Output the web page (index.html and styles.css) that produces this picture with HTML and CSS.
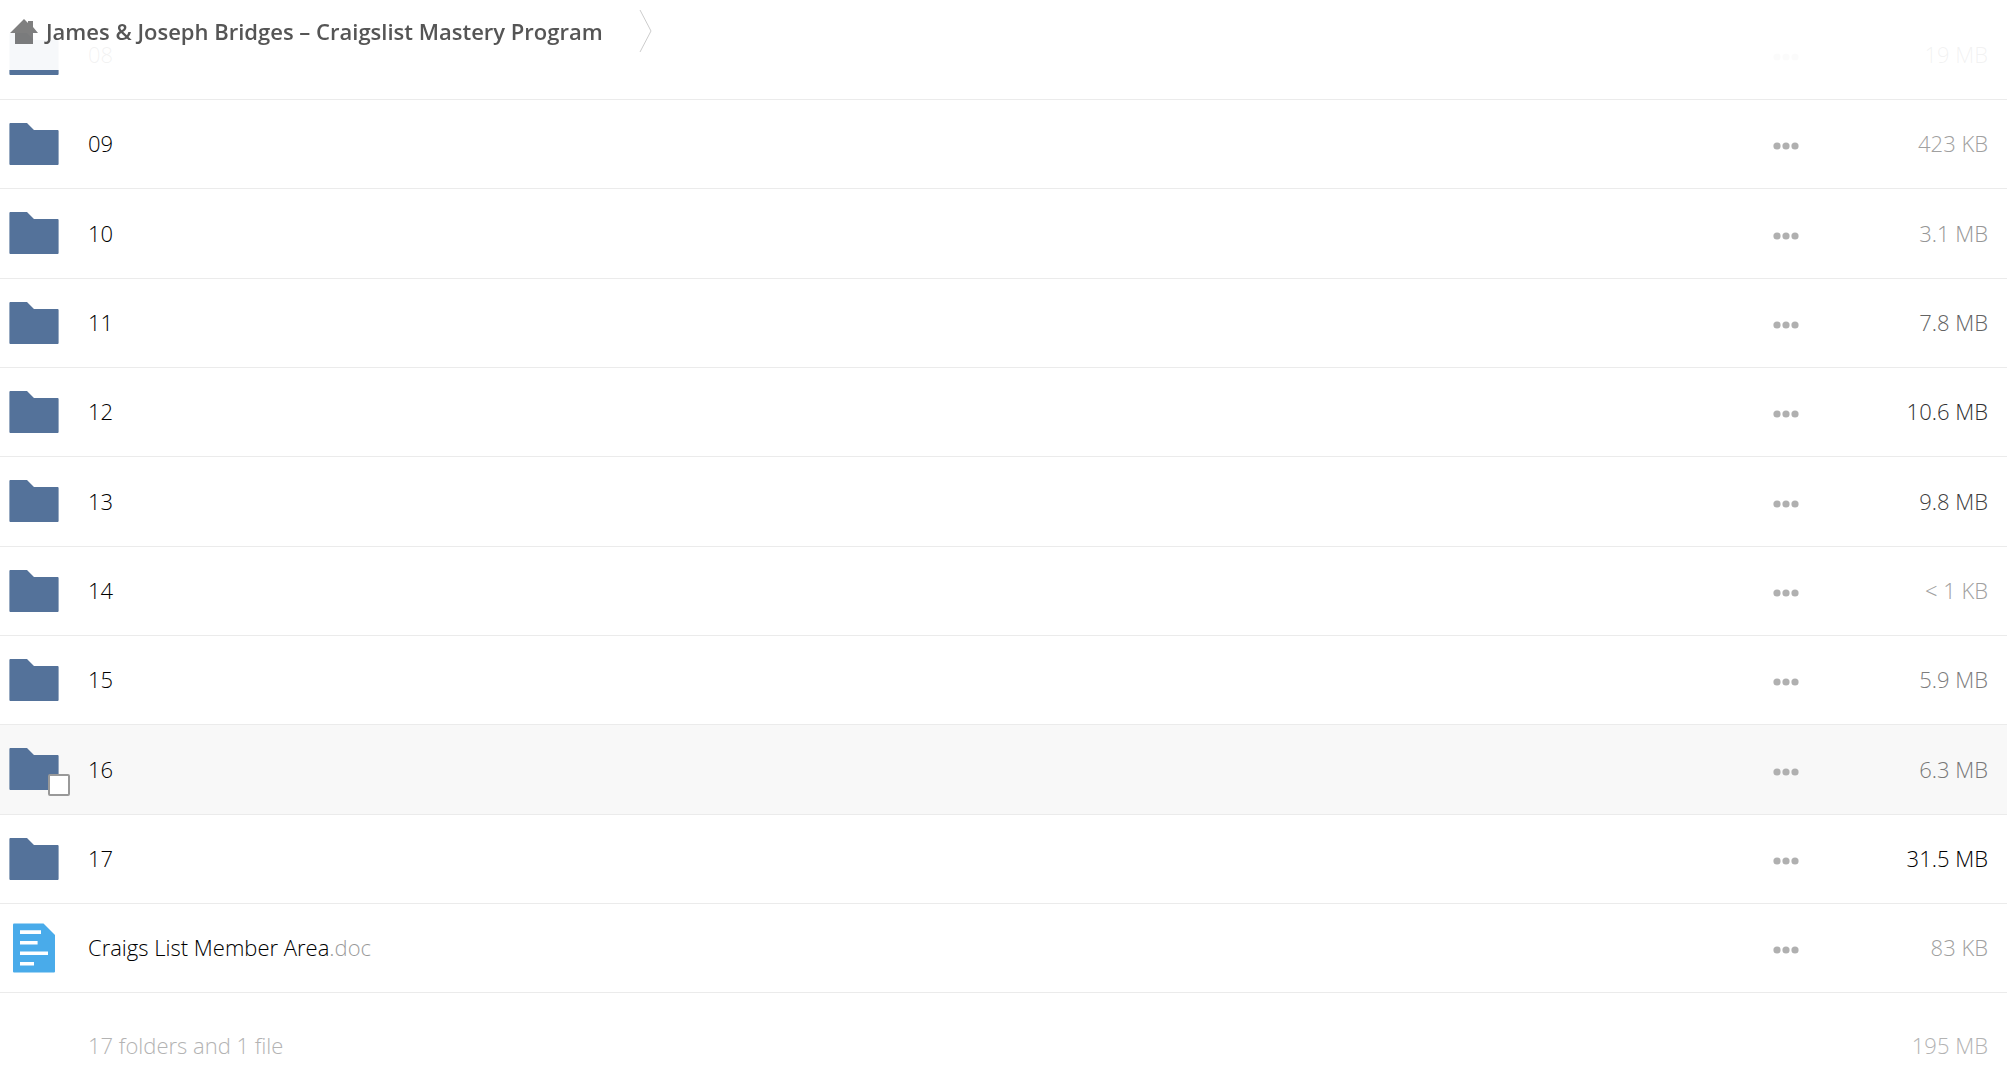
FILE: index.html
```html
<!DOCTYPE html>
<html lang="en">
<head>
  <meta charset="UTF-8" />
  <meta name="viewport" content="width=device-width, initial-scale=1.0" />
  <title>James &amp; Joseph Bridges – Craigslist Mastery Program</title>
  <link rel="stylesheet" href="styles.css">
</head>
<body>
  <svg class="sprite" aria-hidden="true">
    <symbol id="folder" viewBox="0 0 50 42">
      <path fill="#54729a" d="M1.4 0H18L25 7H48.6Q49.6 7 49.6 8V41Q49.6 42 48.6 42H1.4Q0.4 42 0.4 41V1Q0.4 0 1.4 0Z" />
    </symbol>
    <symbol id="document" viewBox="0 0 42 50">
      <path fill="#49abea" d="M1 0.4H30.5L42 12V48.6Q42 49.6 41 49.6H1Q0 49.6 0 48.6V1.4Q0 0.4 1 0.4Z" />
      <path fill="#fff" d="M7 7.3H28V11H7ZM7 18H24.6V21.6H7ZM7 28.4H35V32H7ZM7 39H21V42.6H7Z" />
    </symbol>
    <symbol id="more" viewBox="0 0 26 8">
      <circle cx="4" cy="4" r="3.6" />
      <circle cx="13" cy="4" r="3.6" />
      <circle cx="22" cy="4" r="3.6" />
    </symbol>
  </svg>

  <header class="controls">
    <nav class="breadcrumb">
      <a href="#" class="crumb">
        <svg class="home" viewBox="0 0 28 25" aria-hidden="true">
          <path d="M14 0L18 4V2H23V8L28 14H23V25H5V14H0Z" />
        </svg>
        <span>James &amp; Joseph Bridges – Craigslist Mastery Program</span>
      </a>
      <svg class="separator" viewBox="0 0 13 42" aria-hidden="true">
        <path d="M1 0L12 21L1 42" />
      </svg>
    </nav>
  </header>

  <table class="filelist">
    <tbody>
      <tr>
        <td class="thumb"><svg class="folder"><use href="#folder" /></svg></td>
        <td class="name"><a href="#">08</a></td>
        <td class="action"><button type="button" aria-label="Actions for 08"><svg><use href="#more" /></svg></button></td>
        <td class="size" style="color: rgb(0, 0, 0)">19 MB</td>
      </tr>
      <tr>
        <td class="thumb"><svg class="folder"><use href="#folder" /></svg></td>
        <td class="name"><a href="#">09</a></td>
        <td class="action"><button type="button" aria-label="Actions for 09"><svg><use href="#more" /></svg></button></td>
        <td class="size" style="color: rgb(160, 160, 160)">423 KB</td>
      </tr>
      <tr>
        <td class="thumb"><svg class="folder"><use href="#folder" /></svg></td>
        <td class="name"><a href="#">10</a></td>
        <td class="action"><button type="button" aria-label="Actions for 10"><svg><use href="#more" /></svg></button></td>
        <td class="size" style="color: rgb(150, 150, 150)">3.1 MB</td>
      </tr>
      <tr>
        <td class="thumb"><svg class="folder"><use href="#folder" /></svg></td>
        <td class="name"><a href="#">11</a></td>
        <td class="action"><button type="button" aria-label="Actions for 11"><svg><use href="#more" /></svg></button></td>
        <td class="size" style="color: rgb(99, 99, 99)">7.8 MB</td>
      </tr>
      <tr>
        <td class="thumb"><svg class="folder"><use href="#folder" /></svg></td>
        <td class="name"><a href="#">12</a></td>
        <td class="action"><button type="button" aria-label="Actions for 12"><svg><use href="#more" /></svg></button></td>
        <td class="size" style="color: rgb(48, 48, 48)">10.6 MB</td>
      </tr>
      <tr>
        <td class="thumb"><svg class="folder"><use href="#folder" /></svg></td>
        <td class="name"><a href="#">13</a></td>
        <td class="action"><button type="button" aria-label="Actions for 13"><svg><use href="#more" /></svg></button></td>
        <td class="size" style="color: rgb(64, 64, 64)">9.8 MB</td>
      </tr>
      <tr>
        <td class="thumb"><svg class="folder"><use href="#folder" /></svg></td>
        <td class="name"><a href="#">14</a></td>
        <td class="action"><button type="button" aria-label="Actions for 14"><svg><use href="#more" /></svg></button></td>
        <td class="size" style="color: rgb(160, 160, 160)">&lt; 1 KB</td>
      </tr>
      <tr>
        <td class="thumb"><svg class="folder"><use href="#folder" /></svg></td>
        <td class="name"><a href="#">15</a></td>
        <td class="action"><button type="button" aria-label="Actions for 15"><svg><use href="#more" /></svg></button></td>
        <td class="size" style="color: rgb(125, 125, 125)">5.9 MB</td>
      </tr>
      <tr class="active">
        <td class="thumb">
          <svg class="folder"><use href="#folder" /></svg>
          <input type="checkbox" class="select" aria-label="Select 16">
        </td>
        <td class="name"><a href="#">16</a></td>
        <td class="action"><button type="button" aria-label="Actions for 16"><svg><use href="#more" /></svg></button></td>
        <td class="size" style="color: rgb(120, 120, 120)">6.3 MB</td>
      </tr>
      <tr>
        <td class="thumb"><svg class="folder"><use href="#folder" /></svg></td>
        <td class="name"><a href="#">17</a></td>
        <td class="action"><button type="button" aria-label="Actions for 17"><svg><use href="#more" /></svg></button></td>
        <td class="size" style="color: rgb(0, 0, 0)">31.5 MB</td>
      </tr>
      <tr>
        <td class="thumb"><svg class="document"><use href="#document" /></svg></td>
        <td class="name"><a href="#">Craigs List Member Area<span class="extension">.doc</span></a></td>
        <td class="action"><button type="button" aria-label="Actions for Craigs List Member Area.doc"><svg><use href="#more" /></svg></button></td>
        <td class="size" style="color: rgb(160, 160, 160)">83 KB</td>
      </tr>
    </tbody>
    <tfoot>
      <tr>
        <td></td>
        <td class="name">17 folders and 1 file</td>
        <td></td>
        <td class="size">195 MB</td>
      </tr>
    </tfoot>
  </table>
</body>
</html>
```
FILE: styles.css
```css
* {
  box-sizing: border-box;
}
body {
  margin: 0;
  padding-top: 10px;
  background-color: #fff;
  color: #000;
  font-family: "Open Sans", sans-serif;
  font-size: 22px;
  font-weight: 300;
  line-height: 32px;
}
a {
  color: inherit;
  text-decoration: none;
}
svg {
  display: block;
}
.sprite {
  position: absolute;
  width: 0;
  height: 0;
}

/* breadcrumb bar, stays above the list while it scrolls */
.controls {
  position: fixed;
  top: 0;
  left: 0;
  right: 0;
  z-index: 10;
  height: 70px;
  padding: 10px;
  background-color: rgba(255, 255, 255, 0.95);
}
.breadcrumb {
  display: flex;
  align-items: center;
  gap: 36px;
}
.crumb {
  display: flex;
  align-items: center;
  gap: 8px;
  color: #555;
  font-weight: 600;
}
.home {
  width: 28px;
  height: 25px;
  fill: #000;
  opacity: 0.5;
}
.separator {
  width: 13px;
  height: 42px;
  fill: none;
  stroke: #ccc;
}

.filelist {
  width: 100%;
  border-collapse: separate;
  border-spacing: 0;
  table-layout: fixed;
}
.filelist td {
  height: 89px;
  padding: 0;
  vertical-align: middle;
  border-bottom: 1px solid #ebebeb;
}
.filelist tbody tr:nth-child(3n) td,
.filelist tbody tr:first-child td {
  height: 90px;
}
.filelist tbody tr:nth-child(3n) td.thumb,
.filelist tbody tr:first-child td.thumb {
  padding-bottom: 1px;
}
.filelist td.name,
.filelist td.size {
  padding-bottom: 2px;
}
.filelist tr.active td {
  background-color: #f8f8f8;
}
.filelist td.thumb {
  position: relative;
  width: 88px;
  padding-left: 9px;
}
.folder {
  width: 50px;
  height: 42px;
}
.document {
  width: 42px;
  height: 50px;
  margin-left: 4px;
}
.select {
  position: absolute;
  left: 48px;
  bottom: 18px;
  width: 22px;
  height: 22px;
  margin: 0;
  appearance: none;
  background-color: #fff;
  border: 2px solid #999;
  border-radius: 2px;
}
.extension {
  opacity: 0.4;
}
.filelist td.action {
  width: 100px;
}
.action button {
  display: block;
  margin: 0 auto;
  padding: 12px 10px 8px;
  background: none;
  border: none;
  cursor: pointer;
}
.action svg {
  width: 26px;
  height: 8px;
  fill: #b0b0b0;
}
.filelist td.size {
  width: 171px;
  padding-right: 19px;
  text-align: right;
}
.filelist tfoot td {
  height: 88px;
  padding-top: 18px;
  border-bottom: none;
  color: #b3b3b3;
}
```
